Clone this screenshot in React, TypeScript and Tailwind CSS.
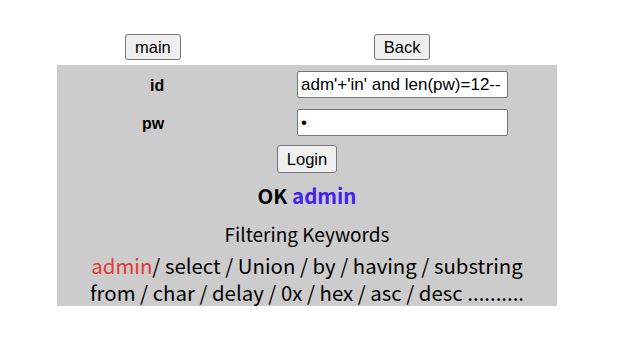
import React from "react";

const btn =
  "h-[26px] px-[9px] border border-[#767676] rounded-[3px] bg-[#efefef] text-[16.5px] text-black leading-none font-['Liberation_Sans',Arial,sans-serif]";
const inp =
  "w-[211px] h-[27px] px-[3px] border border-[#767676] rounded-[2px] bg-white text-[17px] text-black font-['Liberation_Sans',Arial,sans-serif] outline-none";
const kr = "font-['Noto_Sans_CJK_KR','Noto_Sans',sans-serif]";

export default function App() {
  return (
    <div className="w-[619px] h-[357px] bg-white">
      <div className="ml-[57px] w-[500px]">
        <div className="h-[65px] flex pt-[34px]">
          <div className="ml-[68px]">
            <button className={btn}>main</button>
          </div>
          <div className="ml-[193px]">
            <button className={btn}>Back</button>
          </div>
        </div>
        <div className="bg-[#cccccc] h-[241px] flex flex-col">
          <div className="flex items-center mt-[6px] h-[27px]">
            <div className="w-[240px] pl-[93px] pt-[3px] font-bold text-[16px] font-['Liberation_Sans',Arial,sans-serif] text-black">
              id
            </div>
            <input className={inp} readOnly value="adm'+'in' and len(pw)=12--" />
          </div>
          <div className="flex items-center mt-[11px] h-[27px]">
            <div className="w-[240px] pl-[85px] pt-[3px] font-bold text-[16px] font-['Liberation_Sans',Arial,sans-serif] text-black">
              pw
            </div>
            <input className={inp} readOnly type="password" value="a" />
          </div>
          <div className="flex justify-center mt-[9px]">
            <button className={btn + " h-[28px]"}>Login</button>
          </div>
          <div className={"text-center mt-[7px] text-[20.5px] font-bold leading-[30px] " + kr}>
            <span className="text-black">OK </span>
            <span className="text-[#4422ee]">admin</span>
          </div>
          <div className={"text-center mt-[10px] text-[19px] leading-[27px] text-black " + kr}>
            Filtering Keywords
          </div>
          <div className={"text-center mt-[5px] text-[20.4px] leading-[27px] text-black " + kr}>
            <span className="text-[#e53935]">admin</span>/ select / Union / by / having / substring
            <br />
            from / char / delay / 0x / hex / asc / desc ..........
          </div>
        </div>
      </div>
    </div>
  );
}
